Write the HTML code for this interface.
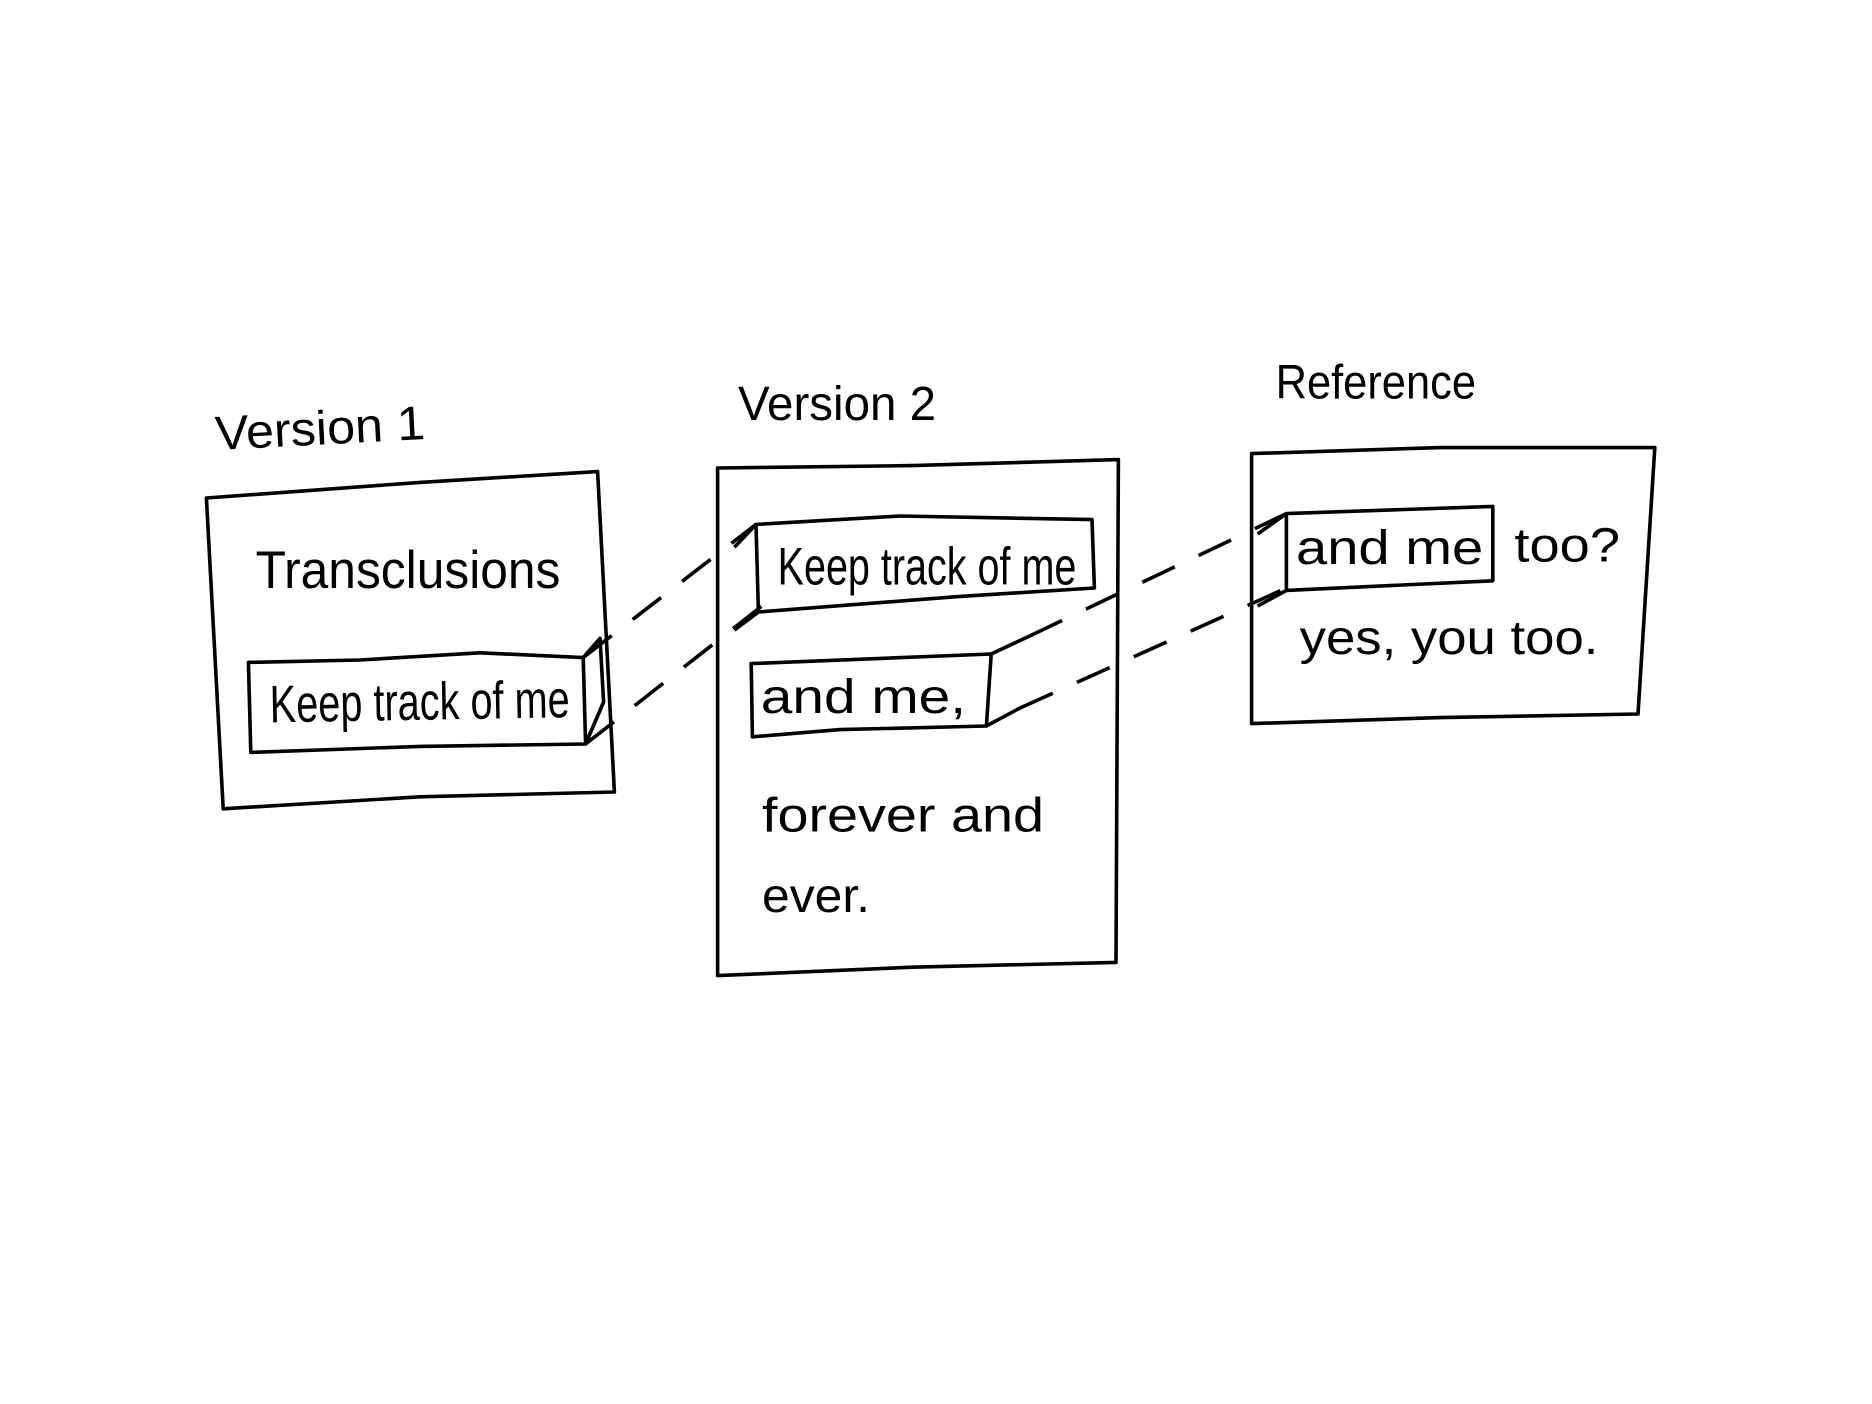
<!DOCTYPE html>
<html><head><meta charset="utf-8"><style>
html,body{margin:0;padding:0;background:#fff;}
svg{display:block}
text{font-family:"Liberation Sans",sans-serif;fill:#000;}
</style></head><body>
<svg width="1872" height="1404" viewBox="0 0 1560 1170" xmlns="http://www.w3.org/2000/svg">
<g fill="none" stroke="#000" stroke-width="3" stroke-linejoin="round">
<!-- box 1 -->
<path d="M172 415 L350 402 L498 393 L512 660 L350 664 L186 674 Z"/>
<path d="M207 552 L300 550 L400 544 L486 548 L488 620 L350 622 L209 627 Z"/>
<path d="M486 548 L500 532 L503 585 L488 620"/>
<!-- box 2 -->
<path d="M598 390 L760 388 L932 383 L930 802 L760 806 L598 813 Z"/>
<path d="M630 437 L750 430 L910 433 L912 490 L800 497 L632 510 Z"/>
<path d="M630 437 L612 456 M632 510 L612 525"/>
<path d="M626 553 L826 545 L822 605 L700 608 L627 614 Z"/>
<path d="M826 545 L858 530 M822 605 L850 590"/>
<!-- box 3 -->
<path d="M1043 378 L1200 373 L1379 373 L1365 595 L1200 598 L1043 603 Z"/>
<path d="M1072 428 L1244 422 L1244 484 L1072 492 Z"/>
<path d="M1072 428 L1048 445 M1072 492 L1048 505"/>
<!-- dashes -->
<path stroke-dasharray="30 22" d="M486 548 L630 437"/>
<path stroke-dasharray="30 22" d="M488 620 L635 505"/>
<path stroke-dasharray="30 22" d="M858 530 L1072 428"/>
<path stroke-dasharray="30 22" d="M850 590 L1072 490"/>
</g>
<text x="180" y="375" font-size="40" textLength="175" lengthAdjust="spacingAndGlyphs" transform="rotate(-3 180 375)">Version 1</text>
<text x="615" y="350" font-size="40" textLength="165" lengthAdjust="spacingAndGlyphs">Version 2</text>
<text x="1063" y="332" font-size="40" textLength="167" lengthAdjust="spacingAndGlyphs">Reference</text>
<text x="213" y="490" font-size="44" textLength="254" lengthAdjust="spacingAndGlyphs">Transclusions</text>
<text x="225" y="602" font-size="44" textLength="250" lengthAdjust="spacingAndGlyphs" transform="rotate(-1 225 602)">Keep track of me</text>
<text x="648" y="487" font-size="44" textLength="249" lengthAdjust="spacingAndGlyphs">Keep track of me</text>
<text x="634" y="594" font-size="40" textLength="171" lengthAdjust="spacingAndGlyphs">and me,</text>
<text x="635" y="693" font-size="40" textLength="235" lengthAdjust="spacingAndGlyphs">forever and</text>
<text x="635" y="760" font-size="40" textLength="90" lengthAdjust="spacingAndGlyphs">ever.</text>
<text x="1080" y="470" font-size="40" textLength="156" lengthAdjust="spacingAndGlyphs">and me</text>
<text x="1262" y="468" font-size="40" textLength="88" lengthAdjust="spacingAndGlyphs">too?</text>
<text x="1083" y="545" font-size="40" textLength="249" lengthAdjust="spacingAndGlyphs">yes, you too.</text>
</svg>
</body></html>
